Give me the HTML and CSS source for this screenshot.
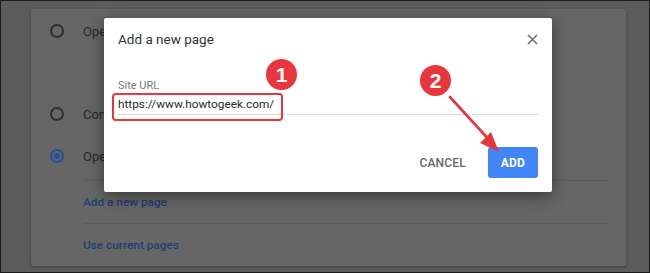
FILE: index.html
```html
<!DOCTYPE html>
<html lang="en">
<head>
<meta charset="utf-8">
<title>Add a new page</title>
<link rel="stylesheet" href="styles.css">
</head>
<body>
<div class="frame">
  <div class="card">
    <div class="row row-first"><span class="radio"></span><span class="label">Open the New Tab page</span></div>
    <div class="row"><span class="radio"></span><span class="label">Continue where you left off</span></div>
    <div class="row"><span class="radio checked"></span><span class="label">Open a specific page or set of pages</span></div>
    <div class="links">
      <div class="link-row">Add a new page</div>
      <div class="link-row">Use current pages</div>
    </div>
  </div>

  <div class="dialog">
    <div class="dialog-header">
      <span class="dialog-title">Add a new page</span>
      <svg class="close" width="11" height="11" viewBox="0 0 11 11"><path d="M1 1 L10 10 M10 1 L1 10" stroke="#6b6b6b" stroke-width="1.5" fill="none"/></svg>
    </div>
    <div class="dialog-body">
      <div class="field-label">Site URL</div>
      <div class="field-input">https://www.howtogeek.com/</div>
    </div>
    <div class="dialog-footer">
      <span class="btn btn-cancel">CANCEL</span>
      <span class="btn btn-add">ADD</span>
    </div>
  </div>

  <div class="highlight"></div>
  <div class="badge badge-1">1</div>
  <div class="badge badge-2">2</div>
  <svg class="arrow" width="650" height="273" viewBox="0 0 650 273">
    <line x1="450" y1="97" x2="492" y2="143" stroke="#e8373c" stroke-width="2.6" stroke-linecap="round"/>
    <polygon points="499,152 480,143 491,132" fill="#e8373c"/>
  </svg>
</div>
</body>
</html>
```

FILE: styles.css
```css
* { box-sizing: border-box; }
html, body { margin: 0; padding: 0; }
body { font-family: Roboto, "Liberation Sans", Arial, sans-serif; background: #5c5c5c; }

.frame {
  position: relative;
  width: 650px;
  height: 273px;
  border: 1px solid #1c1c1c;
  background: #5c5c5c;
  padding: 8px 0 0 30px;
  overflow: hidden;
}

.card {
  width: 595px;
  height: 257px;
  background: #666666;
  border-radius: 2px;
  box-shadow: 0 1px 3px rgba(0,0,0,0.35);
  display: flex;
  flex-direction: column;
}

.row {
  display: flex;
  align-items: center;
  height: 42px;
  padding-left: 19px;
  font-size: 13px;
  color: #262626;
}
.row-first { height: 44px; margin-bottom: 40px; }

.radio {
  width: 14px;
  height: 14px;
  border: 2px solid #303030;
  border-radius: 50%;
  margin-right: 19px;
  flex: none;
  display: flex;
  align-items: center;
  justify-content: center;
}
.radio.checked { border-color: #22509c; }
.radio.checked::after {
  content: "";
  width: 6px;
  height: 6px;
  border-radius: 50%;
  background: #22509c;
}
.label { white-space: nowrap; }

.links {
  margin: 3px 18px 0 52px;
}
.link-row {
  height: 43px;
  border-top: 1px solid #5d5d5d;
  display: flex;
  align-items: center;
  font-size: 11.8px;
  font-weight: 500;
  color: #223d72;
}

.dialog {
  position: absolute;
  left: 103px;
  top: 17px;
  width: 448px;
  height: 174px;
  background: #ffffff;
  border-radius: 2px;
  box-shadow: 0 4px 16px rgba(0,0,0,0.45);
  display: flex;
  flex-direction: column;
}
.dialog-header {
  height: 42px;
  padding: 0 14px;
  display: flex;
  align-items: center;
  justify-content: space-between;
}
.dialog-title { font-size: 13.5px; color: #333333; }
.close { display: block; }

.dialog-body {
  padding: 19px 13px 0 14px;
}
.field-label {
  font-size: 11px;
  line-height: 14px;
  color: #7a7a7a;
}
.field-input {
  margin-top: 1px;
  height: 21px;
  line-height: 20px;
  font-size: 11.8px;
  color: #2a2a2a;
  border-bottom: 1px solid #dedede;
}

.dialog-footer {
  margin-top: auto;
  padding: 0 14px 14px 0;
  display: flex;
  justify-content: flex-end;
  align-items: center;
}
.btn {
  height: 31px;
  display: flex;
  align-items: center;
  justify-content: center;
  font-size: 12px;
  font-weight: 500;
  letter-spacing: 0.2px;
  border-radius: 3px;
}
.btn-cancel { color: #666666; padding: 0 12px; margin-right: 10px; }
.btn-add { width: 50px; background: #4285f4; color: #ffffff; font-weight: 700; }

.highlight {
  position: absolute;
  left: 111px;
  top: 92px;
  width: 171px;
  height: 28px;
  border: 2px solid #e8373c;
  border-radius: 4px;
}
.badge {
  position: absolute;
  width: 31px;
  height: 31px;
  border-radius: 50%;
  background: #e8373c;
  color: #ffffff;
  font-family: "Liberation Sans", Arial, sans-serif;
  font-weight: 700;
  font-size: 21px;
  display: flex;
  align-items: center;
  justify-content: center;
}
.badge-1 { left: 265px; top: 58px; }
.badge-2 { left: 419px; top: 64px; }
.arrow { position: absolute; left: -1px; top: -1px; pointer-events: none; }
```
